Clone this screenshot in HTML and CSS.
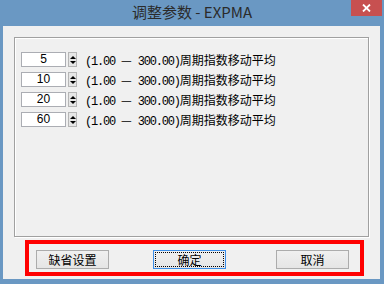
FILE: index.html
```html
<!DOCTYPE html>
<html lang="zh-CN">
<head>
    <meta charset="UTF-8">
    <title>调整参数 - EXPMA</title>
    <link rel="stylesheet" href="styles.css">
</head>
<body>
    <div class="window">
        <div class="titlebar">
            <span></span>
            <span class="title">调整参数 - EXPMA</span>
            <button class="close">
                <svg width="9" height="8" viewBox="0 0 9 8"><path d="M1 0.5 L8 7.5 M8 0.5 L1 7.5" stroke="#fff" stroke-width="1.8"/></svg>
            </button>
        </div>
        <div class="client">
            <div class="group">
                <div class="param-row">
                    <div class="num">5</div>
                    <div class="spin"><span class="up"></span><span class="down"></span></div>
                    <span class="range">(1.00 <span class="dash">—</span> 300.00)</span><span class="desc">周期指数移动平均</span>
                </div>
                <div class="param-row">
                    <div class="num">10</div>
                    <div class="spin"><span class="up"></span><span class="down"></span></div>
                    <span class="range">(1.00 <span class="dash">—</span> 300.00)</span><span class="desc">周期指数移动平均</span>
                </div>
                <div class="param-row">
                    <div class="num">20</div>
                    <div class="spin"><span class="up"></span><span class="down"></span></div>
                    <span class="range">(1.00 <span class="dash">—</span> 300.00)</span><span class="desc">周期指数移动平均</span>
                </div>
                <div class="param-row">
                    <div class="num">60</div>
                    <div class="spin"><span class="up"></span><span class="down"></span></div>
                    <span class="range">(1.00 <span class="dash">—</span> 300.00)</span><span class="desc">周期指数移动平均</span>
                </div>
            </div>
            <!-- highlighted button bar -->
            <div class="actions">
                <button class="btn">缺省设置</button>
                <button class="btn focused">确定</button>
                <button class="btn right">取消</button>
            </div>
        </div>
    </div>
</body>
</html>
```

FILE: styles.css
```css
html, body {
    margin: 0;
    padding: 0;
}

body {
    width: 384px;
    height: 284px;
    overflow: hidden;
    background-color: #6a98c3;
    font-family: "Noto Sans CJK SC", sans-serif;
}

.window {
    display: flex;
    flex-direction: column;
    height: 284px;
}

.titlebar {
    height: 26px;
    display: grid;
    grid-template-columns: 1fr auto 1fr;
}

.title {
    font-family: "Noto Sans CJK SC", sans-serif;
    font-size: 15px;
    line-height: 23px;
    color: #2b2b2b;
}

.close {
    justify-self: end;
    align-self: start;
    width: 31px;
    height: 16px;
    margin-right: 2px;
    padding: 0;
    border: none;
    background-color: #c75050;
    display: flex;
    align-items: center;
    justify-content: center;
}

.client {
    flex: 1;
    margin: 0 4px 5px 3px;
    background-color: #f0f0f0;
    padding: 11px 0 0 11px;
}

.group {
    width: 355px;
    height: 200px;
    border: 1px solid #a0a0a0;
    box-shadow: 1px 1px 0 #fff, inset 1px 1px 0 #fff;
    padding: 14px 0 0 6px;
    box-sizing: border-box;
}

.param-row {
    display: flex;
    align-items: center;
    height: 15px;
    margin-bottom: 5px;
}

.num {
    width: 45px;
    height: 15px;
    box-sizing: border-box;
    border: 1px solid #abadb3;
    background-color: #fff;
    font-family: "Liberation Sans", sans-serif;
    font-size: 12px;
    line-height: 13px;
    text-align: center;
    color: #000;
}

.spin {
    width: 9px;
    height: 15px;
    margin-left: 2px;
    box-sizing: border-box;
    border: 1px solid #b5b5b5;
    background-color: #e6e6e6;
    display: flex;
    flex-direction: column;
    align-items: center;
    justify-content: center;
    gap: 2px;
}

.up {
    border-left: 3px solid transparent;
    border-right: 3px solid transparent;
    border-bottom: 3px solid #000;
}

.down {
    border-left: 3px solid transparent;
    border-right: 3px solid transparent;
    border-top: 3px solid #000;
}

.range {
    margin-left: 8px;
    font-family: "Liberation Mono", monospace;
    font-size: 12px;
    letter-spacing: -1.2px;
    color: #000;
}

.dash {
    font-family: "Noto Sans CJK SC", sans-serif;
    font-size: 12px;
    letter-spacing: 0;
}

.desc {
    font-size: 12px;
    color: #000;
}

.actions {
    width: 339px;
    height: 36px;
    margin: 3px 0 0 11px;
    border: 4px solid #ff0000;
    box-sizing: border-box;
    display: flex;
    align-items: flex-start;
    gap: 44px;
    padding: 6px 11px 0 7px;
}

.btn {
    width: 73px;
    height: 19px;
    padding: 0;
    border: 1px solid #acacac;
    background: linear-gradient(#f0f0f0, #e5e5e5);
    font-family: "Noto Sans CJK SC", sans-serif;
    font-size: 12px;
    line-height: 15px;
    color: #000;
}

.btn.focused {
    border-color: #3c8ee8;
    outline: 1px dotted #000;
    outline-offset: -3px;
}

.btn.right {
    margin-left: auto;
}
```
